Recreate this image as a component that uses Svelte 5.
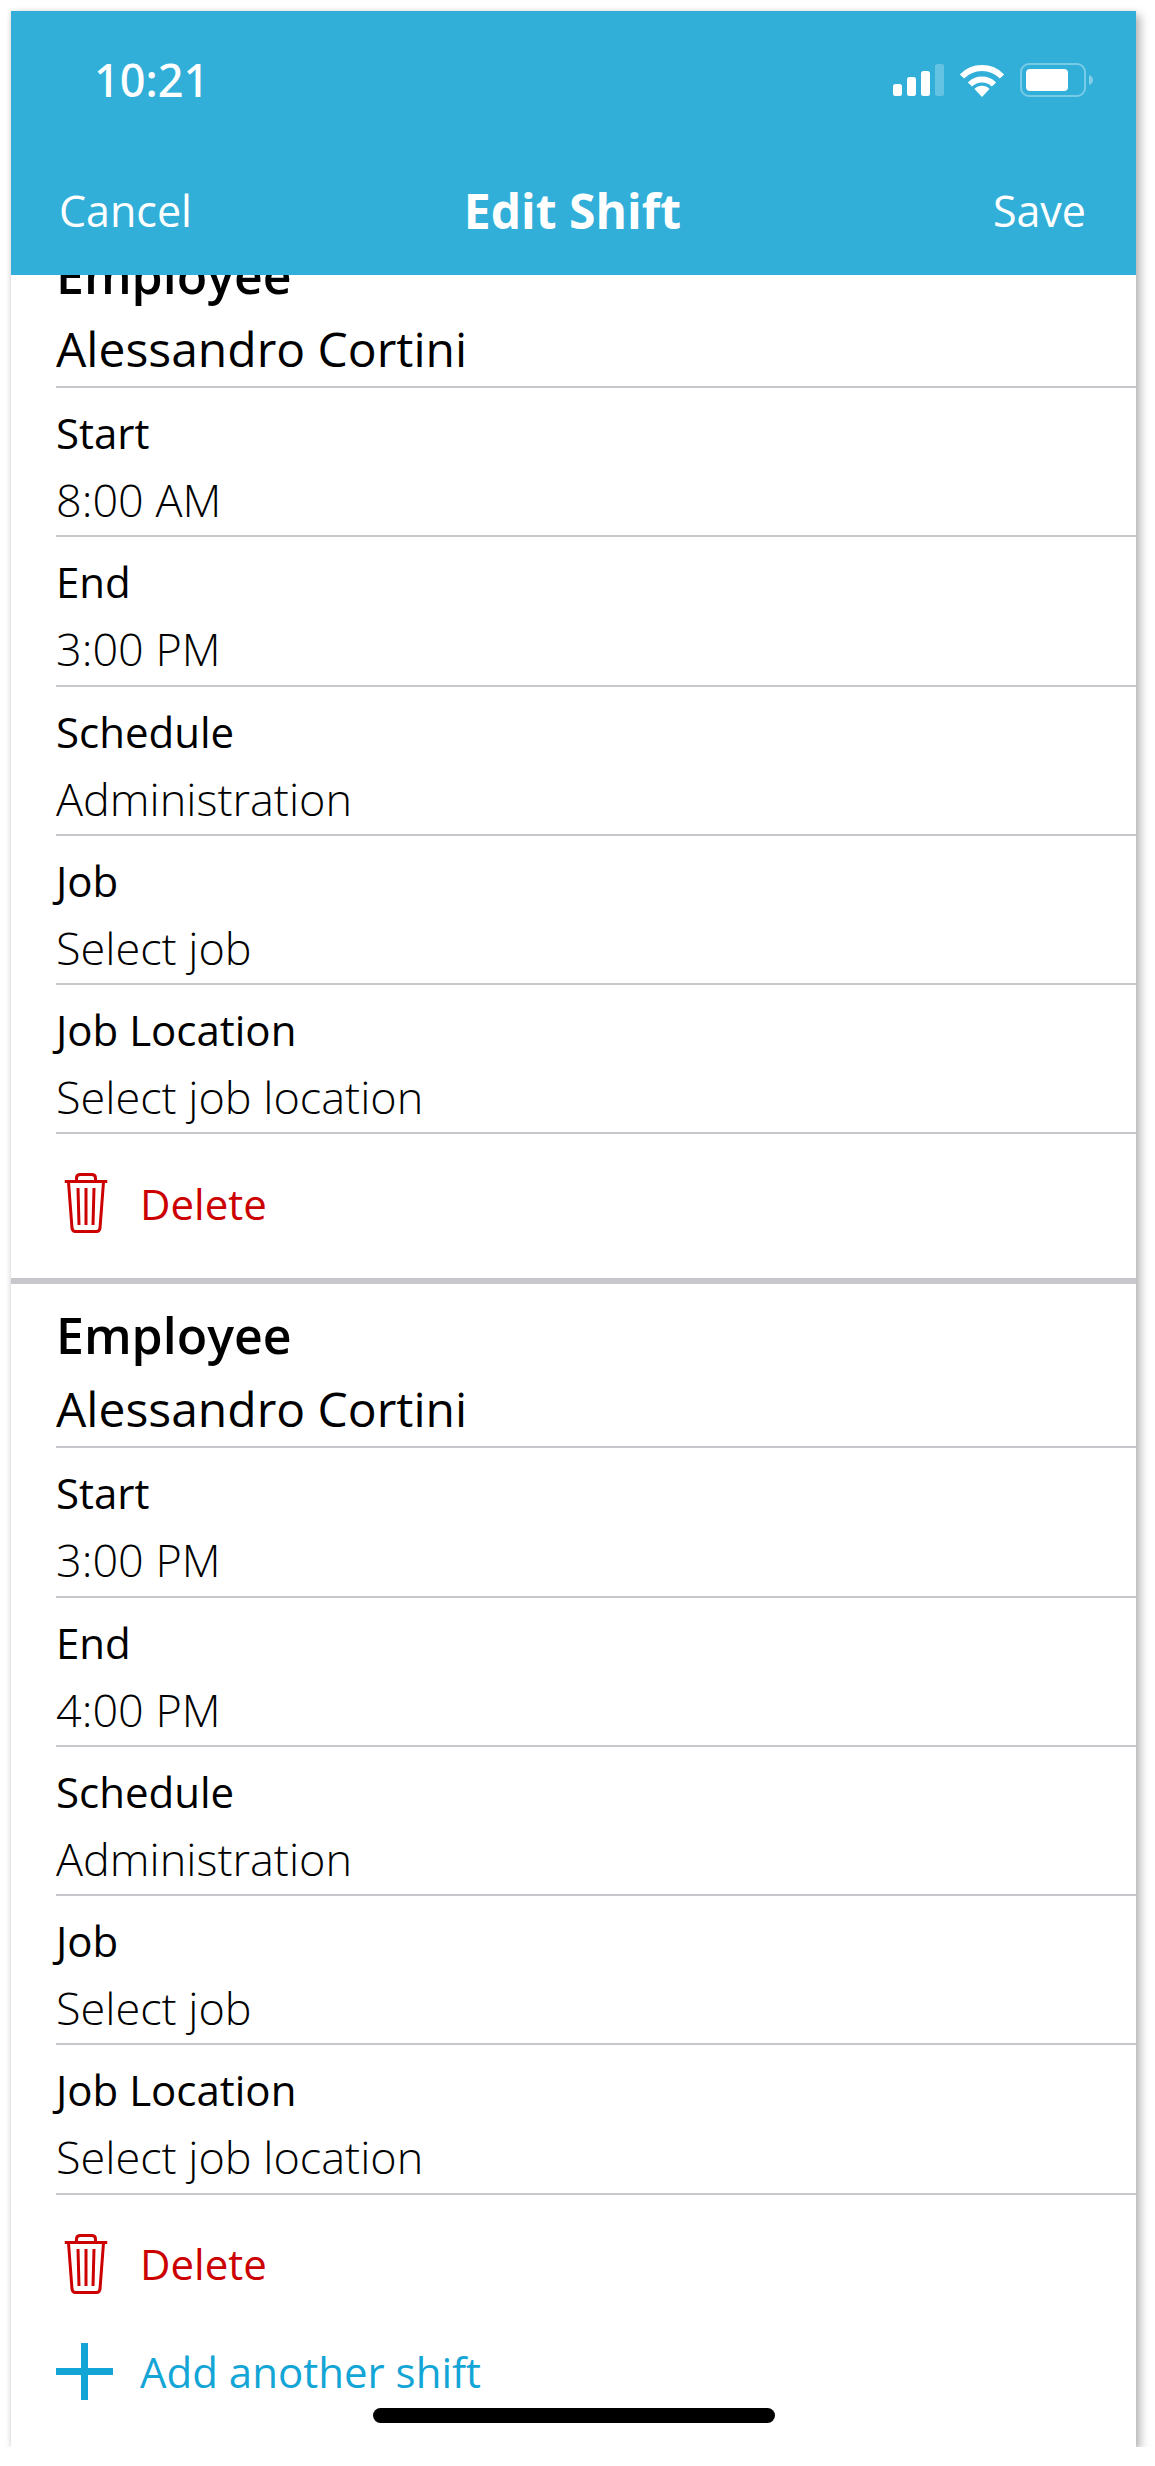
<script>
	const shifts = [
		{ start: '8:00 AM', end: '3:00 PM' },
		{ start: '3:00 PM', end: '4:00 PM' }
	];

	function fieldsFor(shift) {
		return [
			{ label: 'Start', value: shift.start },
			{ label: 'End', value: shift.end },
			{ label: 'Schedule', value: 'Administration' },
			{ label: 'Job', value: 'Select job' },
			{ label: 'Job Location', value: 'Select job location' }
		];
	}
</script>

<div class="screen">
	<header class="header">
		<div class="status">
			<span class="time">10:21</span>
			<div class="status-icons">
				<svg width="51" height="32" viewBox="0 0 51 32">
					<rect x="0" y="20" width="9" height="12" rx="2.5" fill="#fff" />
					<rect x="14" y="13" width="9" height="19" rx="2.5" fill="#fff" />
					<rect x="28" y="7" width="9" height="25" rx="2.5" fill="#fff" />
					<rect x="42" y="0" width="9" height="32" rx="2.5" fill="#fff" opacity="0.25" />
				</svg>
				<svg width="46" height="33" viewBox="0 0 46 33">
					<path d="M3 12.5 A28 28 0 0 1 43 12.5" fill="none" stroke="#fff" stroke-width="6" />
					<path d="M11 20.5 A17 17 0 0 1 35 20.5" fill="none" stroke="#fff" stroke-width="6" />
					<path d="M15.5 25 A10.5 10.5 0 0 1 30.5 25 L23 33 Z" fill="#fff" />
				</svg>
				<svg width="73" height="34" viewBox="0 0 73 34">
					<rect x="1" y="1" width="64" height="32" rx="8" fill="none" stroke="#fff" stroke-opacity="0.35" stroke-width="2" />
					<rect x="6" y="6" width="42" height="22" rx="4" fill="#fff" />
					<path d="M69 12 C72 13 73 15 73 17 C73 19 72 21 69 22 Z" fill="#fff" fill-opacity="0.4" />
				</svg>
			</div>
		</div>
		<nav class="nav">
			<span>Cancel</span>
			<h1>Edit Shift</h1>
			<span>Save</span>
		</nav>
	</header>

	<main class="scroller">
		<div class="content">
			{#each shifts as shift}
				<section class="shift">
					<div class="row employee">
						<h2>Employee</h2>
						<p>Alessandro Cortini</p>
					</div>
					{#each fieldsFor(shift) as field}
						<div class="row field">
							<span class="label">{field.label}</span>
							<p>{field.value}</p>
						</div>
					{/each}
					<button class="action delete">
						<span class="action-icon">
							<svg width="43" height="60" viewBox="0 0 43 60" fill="none" stroke="#cc0000">
								<path d="M0 8.5 H43" stroke-width="3" />
								<path d="M12 8 V5 Q12 1.5 16 1.5 H27 Q31 1.5 31 5 V8" stroke-width="3" />
								<path d="M4 9 L7.5 55 Q8 58.5 11 58.5 H32 Q35 58.5 35.5 55 L39 9" stroke-width="3" />
								<path d="M13.5 15 L14.5 52 M21.5 15 V52 M29.5 15 L28.5 52" stroke-width="3" />
							</svg>
						</span>
						Delete
					</button>
				</section>
			{/each}
			<button class="action add">
				<span class="action-icon">
					<svg width="57" height="57" viewBox="0 0 57 57">
						<path d="M25 0 H32 V25 H57 V32 H32 V57 H25 V32 H0 V25 H25 Z" fill="#13a5d6" />
					</svg>
				</span>
				Add another shift
			</button>
		</div>
	</main>

	<div class="home-indicator"></div>
</div>

<style>
	:global(body) {
		background: #fff;
	}

	.screen {
		position: relative;
		display: flex;
		flex-direction: column;
		width: 1125px;
		height: 2436px;
		margin: 11px 0 0 11px;
		background: #fff;
		box-shadow: 4px 4px 9px rgba(0, 0, 0, 0.3), -1px 0 4px rgba(0, 0, 0, 0.08);
		font-family: 'Open Sans', 'Liberation Sans', sans-serif;
		color: #000;
	}

	.header {
		flex: none;
		height: 264px;
		background: #31afd9;
		color: #fff;
	}

	.status {
		display: flex;
		justify-content: space-between;
		align-items: center;
		height: 34px;
		padding: 52px 43px 0 83px;
	}

	.time {
		font-size: 45px;
		font-weight: 500;
		line-height: 34px;
		font-family: 'Noto Sans', 'Open Sans', sans-serif;
	}

	.status-icons {
		display: flex;
		align-items: center;
		gap: 15px;
	}

	.nav {
		display: grid;
		grid-template-columns: 1fr auto 1fr;
		align-items: center;
		padding: 84px 50px 0 48px;
		font-size: 43px;
		font-weight: 500;
		line-height: 60px;
	}

	.nav span:last-child {
		text-align: right;
	}

	h1 {
		margin: 0;
		font-size: 48px;
		font-weight: 700;
		line-height: 60px;
	}

	.scroller {
		flex: 1;
		overflow: hidden;
		min-height: 0;
	}

	.content {
		margin-top: -51px;
	}

	.shift {
		padding-left: 45px;
	}

	.shift + .shift {
		border-top: 6px solid #c8c7cc;
	}

	.row {
		box-sizing: border-box;
		border-bottom: 2px solid #c8c7cc;
	}

	.employee {
		height: 164px;
		padding-top: 21px;
	}

	h2 {
		margin: 0;
		font-size: 50px;
		font-weight: 600;
		line-height: 60px;
	}

	.employee p {
		margin: 0;
		padding-top: 14px;
		font-size: 48px;
		line-height: 60px;
	}

	.field {
		height: 149.25px;
		padding-top: 23px;
	}

	.label {
		display: block;
		font-size: 42px;
		line-height: 44px;
	}

	.field p {
		margin: 0;
		padding-top: 21px;
		font-size: 45px;
		font-weight: 300;
		line-height: 48px;
	}

	.action {
		display: flex;
		align-items: center;
		width: 100%;
		margin: 0;
		padding: 0;
		border: none;
		background: none;
		font: inherit;
		font-size: 42px;
		text-align: left;
	}

	.action-icon {
		display: flex;
		justify-content: center;
		width: 57px;
		margin-right: 27px;
	}

	.action-icon svg {
		flex: none;
	}

	.delete {
		height: 144px;
		padding-bottom: 6px;
		color: #cc0000;
	}

	.delete svg {
		transform: translateX(1.5px);
	}

	.add {
		height: 66px;
		padding-left: 45px;
		color: #13a5d6;
	}

	.home-indicator {
		position: absolute;
		left: 362px;
		bottom: 24px;
		width: 402px;
		height: 15px;
		border-radius: 8px;
		background: #000;
	}
</style>
